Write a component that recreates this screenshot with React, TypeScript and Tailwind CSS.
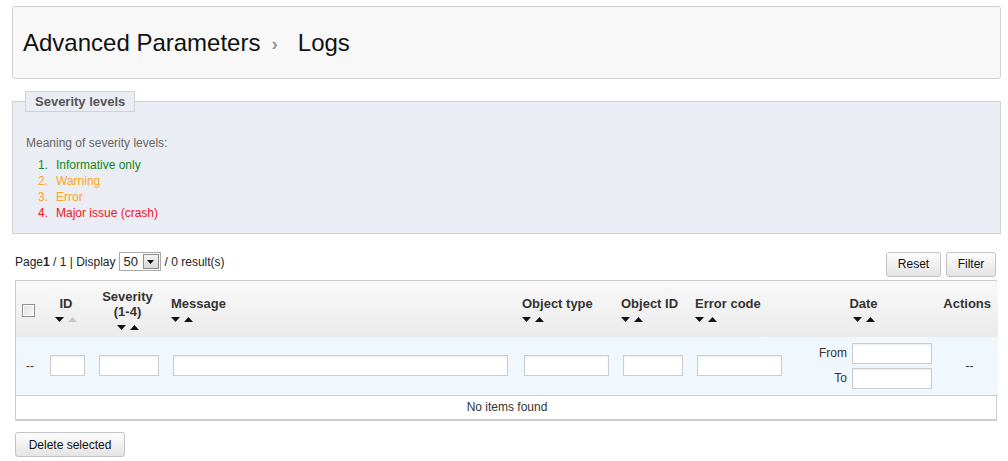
import React from "react";

type Col = {
    key: string;
    label: React.ReactNode;
    width: number;
    align: "left" | "center" | "right";
    sortable?: boolean;
    upDisabled?: boolean;
    headPad?: string;
};

const COLUMNS: Col[] = [
    { key: "check", label: null, width: 27, align: "left" },
    { key: "id", label: "ID", width: 46, align: "center", sortable: true, upDisabled: true },
    { key: "severity", label: <>Severity<br />(1-4)</>, width: 77, align: "center", sortable: true },
    { key: "message", label: "Message", width: 351, align: "left", sortable: true, headPad: "pl-[5px]" },
    { key: "object_type", label: "Object type", width: 99, align: "left", sortable: true, headPad: "pl-[5px]" },
    { key: "object_id", label: "Object ID", width: 74, align: "left", sortable: true, headPad: "pl-[5px]" },
    { key: "error_code", label: "Error code", width: 107, align: "left", sortable: true, headPad: "pl-[5px]" },
    { key: "date", label: "Date", width: 136, align: "center", sortable: true, headPad: "pr-[3px]" },
    { key: "actions", label: "Actions", width: 65, align: "right", headPad: "pr-[7px] pb-[11px]" },
];

const SEVERITIES = [
    { label: "Informative only", color: "text-[#10881e]" },
    { label: "Warning", color: "text-[#f9a61a]" },
    { label: "Error", color: "text-[#f9a61a]" },
    { label: "Major issue (crash)", color: "text-[#f0141e]" },
];

function SortArrows({ upDisabled, align }: { upDisabled?: boolean; align: Col["align"] }) {
    return (
        <div className={`flex gap-[4px] mt-[6px] ${align === "center" ? "justify-center" : "justify-start"}`}>
            <svg width="9" height="5" viewBox="0 0 9 5">
                <path d="M0 0 H9 L4.5 5 Z" fill="#111" />
            </svg>
            <svg width="9" height="5" viewBox="0 0 9 5">
                <path d="M0 5 H9 L4.5 0 Z" fill={upDisabled ? "#c8c8c8" : "#111"} />
            </svg>
        </div>
    );
}

function TextInput({ width }: { width: number }) {
    return (
        <input
            type="text"
            className="h-[21px] border border-[#cccccc] bg-white shadow-[inset_0_1px_2px_rgba(0,0,0,0.08)] outline-none"
            style={{ width }}
        />
    );
}

function Button({ children, className = "" }: { children: React.ReactNode; className?: string }) {
    return (
        <button
            className={`h-[25px] rounded-[3px] border border-[#c3c3c3] bg-gradient-to-b from-[#fdfdfd] to-[#e4e4e4] text-[12px] text-[#111] ${className}`}
        >
            {children}
        </button>
    );
}

export default function App() {
    const font = { fontFamily: '"Liberation Sans", Arial, sans-serif' } as const;

    return (
        <div className="w-[1008px] h-[461px] bg-white overflow-hidden pt-[6px] text-[#333]" style={font}>
            {/* Breadcrumb header */}
            <div className="ml-[12px] mr-[7px] h-[73px] rounded-[3px] border border-[#d0d0d0] bg-[#f8f8f8] flex items-center pl-[10px] pt-[1px]">
                <h2 className="text-[24px] leading-none text-[#111] flex items-center">
                    <span>Advanced Parameters</span>
                    <span className="ml-[11px] mr-[20px] text-[19px] text-[#999] font-bold">›</span>
                    <span>Logs</span>
                </h2>
            </div>

            {/* Severity levels */}
            <fieldset className="ml-[12px] mr-[7px] mt-[12px] h-[143px] border border-[#cfd1da] bg-[#ebedf4] px-[13px] pb-[12px] pt-0">
                <legend className="-ml-[1px] h-[21px] border border-[#cfd1da] bg-[#ebedf4] px-[9px] text-[13px] font-bold leading-[19px] text-[#555]">
                    Severity levels
                </legend>
                <p className="mt-[23px] text-[12px] leading-[16px] text-[#666]">Meaning of severity levels:</p>
                <ol className="mt-[6px] text-[12px] leading-[16px]">
                    {SEVERITIES.map((s, i) => (
                        <li key={s.label} className={`${s.color} flex`}>
                            <span className="w-[22px] text-right">{i + 1}.</span>
                            <span className="ml-[8px]">{s.label}</span>
                        </li>
                    ))}
                </ol>
            </fieldset>

            {/* Pagination + filter buttons */}
            <div className="ml-[15px] mr-[12px] mt-[17px] flex items-center justify-between h-[26px]">
                <div className="flex items-center text-[12px] text-[#222] -mt-[5px]">
                    <span>
                        Page<b>1</b> / 1 | Display
                    </span>
                    <div className="ml-[3px] mr-[4px] flex h-[19px] w-[42px] items-center border border-[#a9a9a9] bg-white">
                        <span className="flex-1 pl-[4px] text-[13px] leading-none">50</span>
                        <div className="mr-[1px] flex h-[15px] w-[16px] items-center justify-center border border-[#8a8a8a] bg-gradient-to-b from-[#f4f4f4] to-[#d8d8d8]">
                            <svg width="7" height="4" viewBox="0 0 7 4">
                                <path d="M0 0 H7 L3.5 4 Z" fill="#111" />
                            </svg>
                        </div>
                    </div>
                    <span>/ 0 result(s)</span>
                </div>
                <div className="flex gap-[5px]">
                    <Button className="w-[55px]">Reset</Button>
                    <Button className="w-[50px]">Filter</Button>
                </div>
            </div>

            {/* Logs table */}
            <div className="ml-[15px] mr-[11px] mt-[3px] border border-b-2 border-[#cccccc]">
                <table className="w-full table-fixed border-collapse text-[12px]">
                    <colgroup>
                        {COLUMNS.map((c) => (
                            <col key={c.key} style={{ width: c.width }} />
                        ))}
                    </colgroup>
                    <thead>
                        <tr className="h-[56px]">
                            {COLUMNS.map((c) => (
                                <th
                                    key={c.key}
                                    className={`bg-gradient-to-b from-[#f9f9f9] to-[#ebebeb] align-middle font-bold text-[13px] leading-[15px] text-[#333] ${
                                        c.align === "center" ? "text-center" : c.align === "right" ? "text-right" : "text-left"
                                    } ${c.headPad ?? ""}`}
                                >
                                    {c.key === "check" ? (
                                        <div className="ml-[6px] mt-[2px] h-[13px] w-[13px] border border-[#8e8f8f] bg-gradient-to-br from-[#e2e2e2] to-[#f6f6f6] shadow-[inset_0_0_0_1px_#ffffff]" />
                                    ) : (
                                        <>
                                            <div>{c.label}</div>
                                            {c.sortable && <SortArrows upDisabled={c.upDisabled} align={c.align} />}
                                        </>
                                    )}
                                </th>
                            ))}
                        </tr>
                    </thead>
                    <tbody>
                        <tr className="h-[58px] bg-[#f0f7fd]">
                            <td className="pl-[10px] align-middle">--</td>
                            <td className="text-center align-middle">
                                <div className="flex justify-center pl-[2px]"><TextInput width={35} /></div>
                            </td>
                            <td className="align-middle">
                                <div className="flex justify-center pl-[3px]"><TextInput width={60} /></div>
                            </td>
                            <td className="pl-[7px] align-middle"><TextInput width={335} /></td>
                            <td className="pl-[7px] align-middle"><TextInput width={85} /></td>
                            <td className="pl-[7px] align-middle"><TextInput width={60} /></td>
                            <td className="pl-[7px] align-middle"><TextInput width={85} /></td>
                            <td className="pr-[1px] align-middle">
                                <div className="flex flex-col items-end gap-[4px]">
                                    <label className="flex items-center gap-[5px] text-[12px]">
                                        From <TextInput width={80} />
                                    </label>
                                    <label className="flex items-center gap-[5px] text-[12px]">
                                        To <TextInput width={80} />
                                    </label>
                                </div>
                            </td>
                            <td className="pl-[8px] text-center align-middle">--</td>
                        </tr>
                        <tr className="h-[24px] border-t border-[#cccccc]">
                            <td colSpan={COLUMNS.length} className="text-center align-middle text-[#333]">
                                No items found
                            </td>
                        </tr>
                    </tbody>
                </table>
            </div>

            <Button className="ml-[15px] mt-[11px] w-[110px]">Delete selected</Button>
        </div>
    );
}
